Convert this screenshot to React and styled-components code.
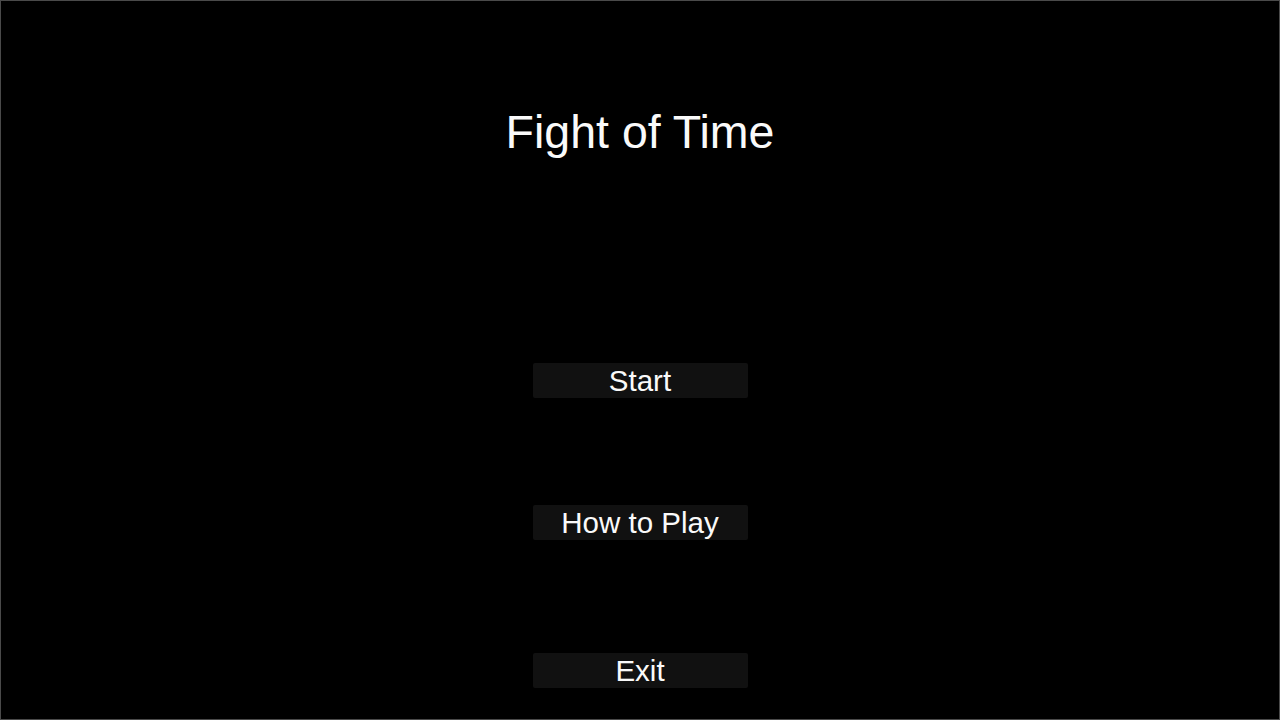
import React from "react";
import styled, { createGlobalStyle } from "styled-components";

const GlobalStyle = createGlobalStyle`
  html, body {
    margin: 0;
    padding: 0;
    background: #000;
  }
  * {
    box-sizing: border-box;
  }
`;

const Screen = styled("div")`
  width: 1280px;
  height: 720px;
  background: #000;
  border: 1px solid #4a4a4a;
  display: flex;
  flex-direction: column;
  align-items: center;
  padding-top: 105px;
  font-family: "Liberation Sans", Arial, sans-serif;
  color: #fafafa;
  overflow: hidden;
`;

const Title = styled("h1")`
  margin: 0;
  font-weight: 400;
  font-size: 46.5px;
  line-height: 52px;
`;

const Menu = styled("div")`
  display: flex;
  flex-direction: column;
  align-items: center;
`;

const MenuButton = styled("button")`
  width: 215px;
  height: 35px;
  margin-top: ${(p) => p.$space}px;
  border: none;
  border-radius: 2px;
  background: #111111;
  color: #fafafa;
  font-family: "Liberation Sans", Arial, sans-serif;
  font-size: 29.5px;
  line-height: 35px;
  padding: 0;
  cursor: pointer;
`;

const items = [
  { label: "Start", space: 205 },
  { label: "How to Play", space: 107 },
  { label: "Exit", space: 113 },
];

const App = () => {
  return (
    <>
      <GlobalStyle />
      <Screen>
        <Title>Fight of Time</Title>
        <Menu>
          {items.map((item) => (
            <MenuButton key={item.label} $space={item.space}>
              {item.label}
            </MenuButton>
          ))}
        </Menu>
      </Screen>
    </>
  );
};

export default App;
